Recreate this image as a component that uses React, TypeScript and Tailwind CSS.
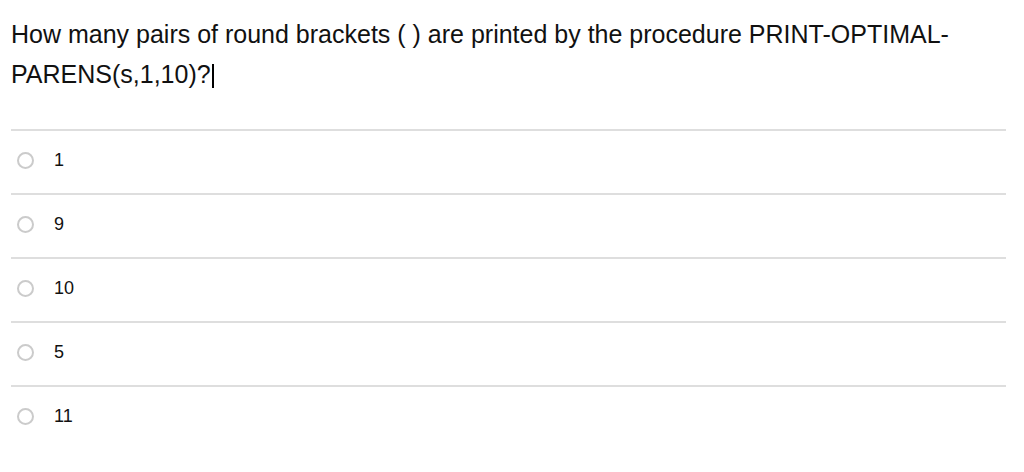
const options = ["1", "9", "10", "5", "11"];

export default function App() {
  return (
    <div className="min-h-screen bg-white pl-[11px] pr-[18px] pt-[14px] font-['Liberation_Sans',Arial,sans-serif] text-black">
      <p className="text-[25px] leading-[40px] text-[#111]">
        How many pairs of round brackets ( ) are printed by the procedure PRINT-OPTIMAL-
        <br />
        PARENS(s,1,10)?
        <span className="ml-[1px] inline-block h-[24px] w-[2px] translate-y-[5px] bg-black align-baseline" />
      </p>
      <div className="mt-[35px]">
        {options.map((o) => (
          <div key={o} className="flex h-[64px] items-center border-t-2 border-[#dedede] pb-[4px]">
            <span className="ml-[6px] h-[17px] w-[17px] rounded-full border-2 border-[#cbcbcb]" />
            <span className="ml-[20px] text-[18px] text-[#111]">{o}</span>
          </div>
        ))}
      </div>
    </div>
  );
}
